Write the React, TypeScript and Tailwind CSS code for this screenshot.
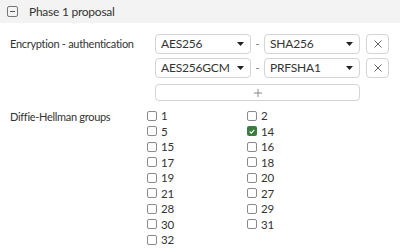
import React from 'react';

const groups = [
  { id: '1', checked: false },
  { id: '2', checked: false },
  { id: '5', checked: false },
  { id: '14', checked: true },
  { id: '15', checked: false },
  { id: '16', checked: false },
  { id: '17', checked: false },
  { id: '18', checked: false },
  { id: '19', checked: false },
  { id: '20', checked: false },
  { id: '21', checked: false },
  { id: '27', checked: false },
  { id: '28', checked: false },
  { id: '29', checked: false },
  { id: '30', checked: false },
  { id: '31', checked: false },
  { id: '32', checked: false },
];

const pairs = [
  { enc: 'AES256', auth: 'SHA256' },
  { enc: 'AES256GCM', auth: 'PRFSHA1' },
];

const Select: React.FC<{ value: string }> = ({ value }) => (
  <div className="w-[96px] h-[20px] border border-[#d4d4d4] rounded-[4px] bg-white flex items-center justify-between pl-[5px] pr-[6px]">
    <span className="text-[12px] tracking-[-0.2px] text-[#333]">{value}</span>
    <svg width="7" height="4" viewBox="0 0 7 4">
      <path d="M0 0h7L3.5 4z" fill="#222" />
    </svg>
  </div>
);

const App: React.FC = () => {
  return (
    <div className="w-[400px] h-[249px] bg-white overflow-hidden font-['Lato','Liberation_Sans',sans-serif] text-[#333]">
      {/* Section header */}
      <div className="h-[23px] bg-[#f3f3f3] flex items-center pl-[7px] gap-[11px]">
        <div className="w-[11px] h-[11px] border border-[#777] rounded-[2px] flex items-center justify-center">
          <div className="w-[5px] h-px bg-[#555]"></div>
        </div>
        <span className="text-[12px] tracking-[-0.25px] text-[#333]">Phase 1 proposal</span>
      </div>

      {/* Encryption - authentication */}
      <div className="flex mt-[11px]">
        <div className="w-[155px] pl-[10px] text-[11px] tracking-[-0.3px] leading-[20px]">Encryption - authentication</div>
        <div className="flex flex-col gap-[4px]">
          {pairs.map(p => (
            <div key={p.enc} className="flex items-center">
              <Select value={p.enc} />
              <span className="w-[13px] text-center text-[11px] text-[#777]">-</span>
              <Select value={p.auth} />
              <div className="ml-[6px] w-[23px] h-[20px] border border-[#d4d4d4] rounded-[4px] flex items-center justify-center">
                <svg width="8" height="8" viewBox="0 0 8 8">
                  <path d="M0.5 0.5l7 7M7.5 0.5l-7 7" stroke="#666" strokeWidth="1" />
                </svg>
              </div>
            </div>
          ))}
          <div className="mt-[2px] w-[205px] h-[17px] border border-[#d4d4d4] rounded-[4px] flex items-center justify-center">
            <svg width="8" height="8" viewBox="0 0 8 8">
              <path d="M4 0v8M0 4h8" stroke="#888" strokeWidth="1" />
            </svg>
          </div>
        </div>
      </div>

      {/* Diffie-Hellman groups */}
      <div className="flex mt-[7px]">
        <div className="w-[147px] pl-[10px] text-[11px] tracking-[-0.3px] leading-[15.5px] pt-[1px]">Diffie-Hellman groups</div>
        <div className="grid grid-cols-[100px_100px]">
          {groups.map(g => (
            <div key={g.id} className="flex items-center h-[15.5px] gap-[4px]">
              {g.checked ? (
                <div className="w-[10px] h-[10px] rounded-[2px] bg-[#3b7d41] flex items-center justify-center">
                  <svg width="6" height="5" viewBox="0 0 6 5">
                    <path d="M0.7 2.5l1.6 1.6L5.3 0.9" stroke="white" strokeWidth="1.1" fill="none" />
                  </svg>
                </div>
              ) : (
                <div className="w-[10px] h-[10px] rounded-[2px] border border-[#8a8a8a] bg-white"></div>
              )}
              <span className="text-[11.5px] tracking-[-0.2px] text-[#333]">{g.id}</span>
            </div>
          ))}
        </div>
      </div>
    </div>
  );
};

export default App;
